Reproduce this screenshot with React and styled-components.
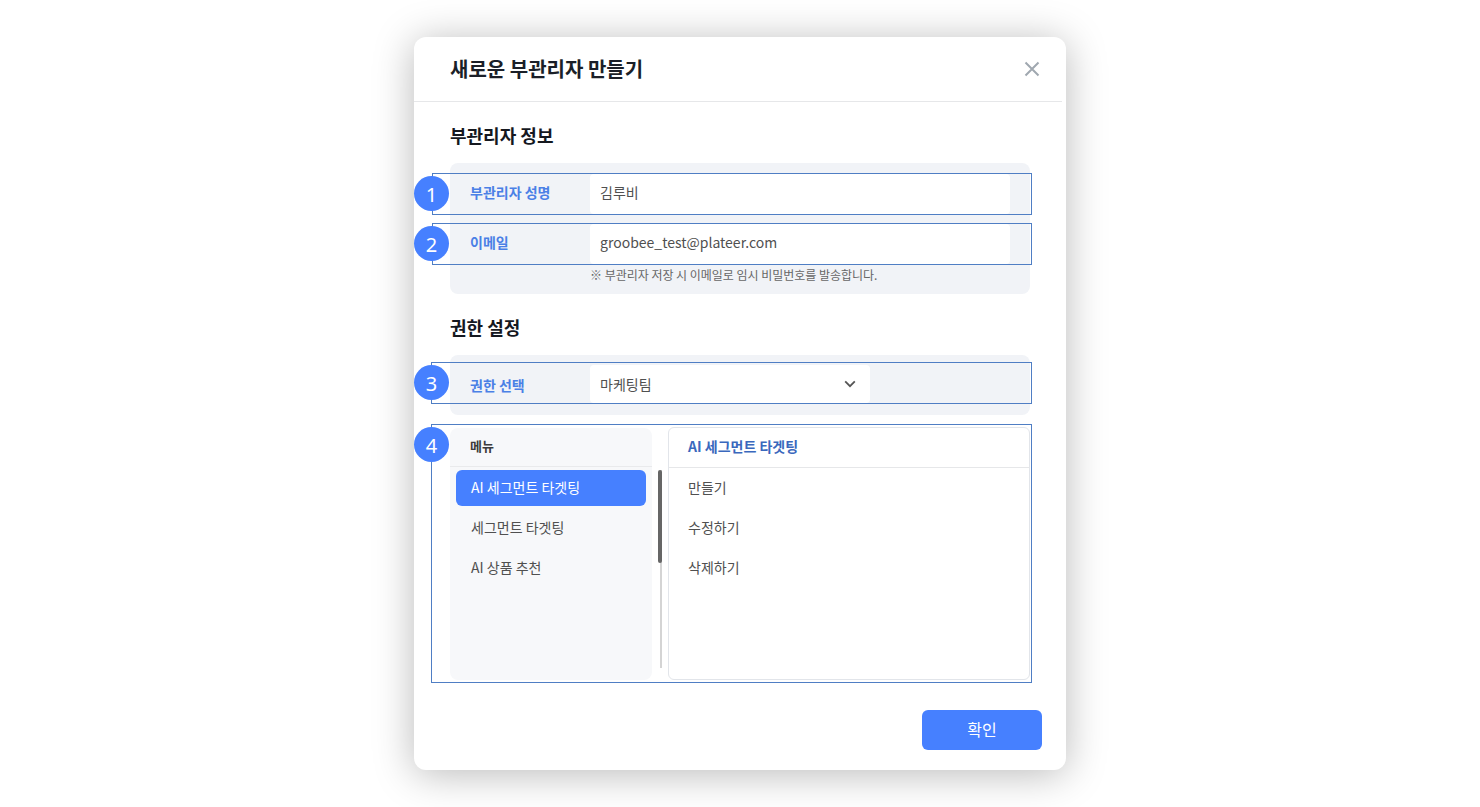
import React from 'react';
import styled, { createGlobalStyle } from 'styled-components';

const GlobalStyle = createGlobalStyle`
  html, body {
    margin: 0;
    background: #fff;
    font-family: "Noto Sans CJK KR", "Noto Sans", sans-serif;
    color: #333;
  }
  * { box-sizing: border-box; }
`;

const menus = ['AI 세그먼트 타겟팅', '세그먼트 타겟팅', 'AI 상품 추천'];
const actions = ['만들기', '수정하기', '삭제하기'];
const notes = [
  { top: 136, height: 42, left: 18, width: 600 },
  { top: 186, height: 42, left: 18, width: 600 },
  { top: 325, height: 42, left: 17, width: 601 },
  { top: 387, height: 259, left: 17, width: 601 },
];
const badges = [139, 189, 328, 390];

const App = () => (
  <Page>
    <GlobalStyle />
    <Modal>
      <Header>
        <Title>새로운 부관리자 만들기</Title>
        <CloseIcon viewBox="0 0 16 16">
          <path d="M1.5 1.5l13 13M14.5 1.5l-13 13" />
        </CloseIcon>
      </Header>
      <Body>
        <SectionTitle>부관리자 정보</SectionTitle>
        <InfoPanel>
          <Row>
            <Label>부관리자 성명</Label>
            <Field>김루비</Field>
          </Row>
          <Row>
            <Label>이메일</Label>
            <Field>groobee_test@plateer.com</Field>
          </Row>
          <Hint>※ 부관리자 저장 시 이메일로 임시 비밀번호를 발송합니다.</Hint>
        </InfoPanel>
        <SectionTitle>권한 설정</SectionTitle>
        <RolePanel>
          <Row>
            <SelectLabel>권한 선택</SelectLabel>
            <Select>
              마케팅팀
              <Chevron viewBox="0 0 12 8">
                <path d="M1.2 1.4L6 6.2l4.8-4.8" />
              </Chevron>
            </Select>
          </Row>
        </RolePanel>
        <Columns>
          <MenuPanel>
            <MenuHead>메뉴</MenuHead>
            <MenuList>
              {menus.map((menu, i) => (
                <MenuItem key={menu} $active={i === 0}>{menu}</MenuItem>
              ))}
            </MenuList>
          </MenuPanel>
          <Scrollbar />
          <DetailPanel>
            <DetailHead>AI 세그먼트 타겟팅</DetailHead>
            {actions.map((action) => (
              <DetailItem key={action}>{action}</DetailItem>
            ))}
          </DetailPanel>
        </Columns>
      </Body>
      <Footer>
        <ConfirmButton type="button">확인</ConfirmButton>
      </Footer>
      {notes.map((note) => (
        <NoteBox key={note.top} $top={note.top} $height={note.height} $left={note.left} $width={note.width} />
      ))}
      {badges.map((top, i) => (
        <Badge key={top} $top={top}>{i + 1}</Badge>
      ))}
    </Modal>
  </Page>
);

const Page = styled.div`
  height: 807px;
  padding-top: 37px;
  overflow: hidden;
`;

const Modal = styled.div`
  position: relative;
  width: 652px;
  height: 733px;
  margin: 0 auto;
  background: #fff;
  border-radius: 12px;
  box-shadow: 0 4px 40px rgba(0, 0, 0, 0.28);
`;

const Header = styled.div`
  display: flex;
  align-items: center;
  justify-content: space-between;
  height: 65px;
  margin-right: 4px;
  padding: 0 22px 0 36px;
  border-bottom: 1px solid #e6e7e9;
`;

const Title = styled.h1`
  margin: 0;
  font-size: 20px;
  font-weight: 700;
  line-height: 30px;
  color: #1b1f28;
`;

const CloseIcon = styled.svg`
  width: 16px;
  height: 16px;
  fill: none;
  stroke: #a0a8b0;
  stroke-width: 2;
`;

const Body = styled.div`
  padding: 0 36px;
`;

const SectionTitle = styled.h2`
  margin: 0;
  padding-top: 20px;
  height: 61px;
  font-size: 18px;
  font-weight: 700;
  line-height: 26px;
  color: #15181f;
`;

const InfoPanel = styled.div`
  height: 131px;
  padding-top: 11px;
  background: #f1f3f7;
  border-radius: 8px;
  display: flex;
  flex-direction: column;
  gap: 10px;
`;

const RolePanel = styled.div`
  height: 60px;
  padding-top: 10px;
  background: #f1f3f7;
  border-radius: 8px;
`;

const Row = styled.div`
  display: flex;
  align-items: center;
`;

const Label = styled.div`
  width: 140px;
  padding: 0 0 4px 20px;
  font-size: 14px;
  font-weight: 700;
  color: #4a80e6;
`;

const SelectLabel = styled(Label)`
  padding: 2px 0 0 20px;
`;

const Field = styled.div`
  width: 420px;
  height: 40px;
  padding: 0 10px;
  background: #fff;
  border-radius: 4px;
  font-size: 14px;
  line-height: 37px;
  color: #505050;
`;

const Select = styled(Field)`
  display: flex;
  align-items: center;
  justify-content: space-between;
  width: 280px;
  height: 38px;
  padding-right: 14px;
`;

const Chevron = styled.svg`
  width: 12px;
  height: 8px;
  fill: none;
  stroke: #555;
  stroke-width: 1.8;
`;

const Hint = styled.div`
  margin-top: -9px;
  padding-left: 140px;
  font-size: 12px;
  line-height: 20px;
  letter-spacing: -0.02px;
  color: #666;
`;

const Columns = styled.div`
  display: flex;
  height: 253px;
  margin-top: 12px;
`;

const MenuPanel = styled.div`
  width: 202px;
  height: 252px;
  margin-top: 1px;
  background: #f7f8fa;
  border-radius: 8px;
`;

const MenuHead = styled.div`
  height: 39px;
  padding-left: 20px;
  border-bottom: 1px solid #e9eaec;
  font-size: 13px;
  font-weight: 700;
  line-height: 36px;
  color: #3c3c3c;
`;

const MenuList = styled.div`
  display: flex;
  flex-direction: column;
  gap: 4px;
  padding: 3px 6px;
`;

const MenuItem = styled.div`
  height: 36px;
  padding-left: 15px;
  border-radius: 6px;
  font-size: 14px;
  line-height: 34px;
  background: ${({ $active }) => ($active ? '#4680ff' : 'transparent')};
  color: ${({ $active }) => ($active ? '#fff' : '#505050')};
`;

const Scrollbar = styled.div`
  position: relative;
  width: 16px;
  margin-top: 43px;
  height: 198px;
  &::before {
    content: '';
    position: absolute;
    left: 7.5px;
    top: 0;
    bottom: 0;
    width: 2px;
    background: #d4d4d4;
  }
  &::after {
    content: '';
    position: absolute;
    left: 6px;
    top: 0;
    width: 4px;
    height: 93px;
    border-radius: 2px;
    background: #666;
  }
`;

const DetailPanel = styled.div`
  width: 362px;
  height: 253px;
  border: 1px solid #e2e5ea;
  border-radius: 6px;
`;

const DetailHead = styled.div`
  height: 40px;
  margin-bottom: 1px;
  padding-left: 19px;
  border-bottom: 1px solid #e6e7e9;
  font-size: 14px;
  font-weight: 700;
  line-height: 36px;
  color: #3a68bd;
`;

const DetailItem = styled.div`
  height: 40px;
  padding-left: 19px;
  font-size: 14px;
  line-height: 36px;
  color: #505050;
`;

const Footer = styled.div`
  display: flex;
  justify-content: flex-end;
  margin-top: 30px;
  padding-right: 24px;
`;

const ConfirmButton = styled.button`
  width: 120px;
  height: 40px;
  padding-bottom: 3px;
  border: 0;
  border-radius: 6px;
  background: #4680ff;
  color: #fff;
  font-family: inherit;
  font-size: 16px;
`;

const NoteBox = styled.div`
  position: absolute;
  top: ${({ $top }) => $top}px;
  left: ${({ $left }) => $left}px;
  width: ${({ $width }) => $width}px;
  height: ${({ $height }) => $height}px;
  border: 1px solid #4f7ec4;
  pointer-events: none;
`;

const Badge = styled.div`
  position: absolute;
  top: ${({ $top }) => $top}px;
  left: 0;
  width: 35px;
  height: 35px;
  border-radius: 50%;
  background: #4680ff;
  color: #fff;
  font-family: "Noto Sans", sans-serif;
  font-size: 20px;
  line-height: 37px;
  text-align: center;
`;

export default App;
